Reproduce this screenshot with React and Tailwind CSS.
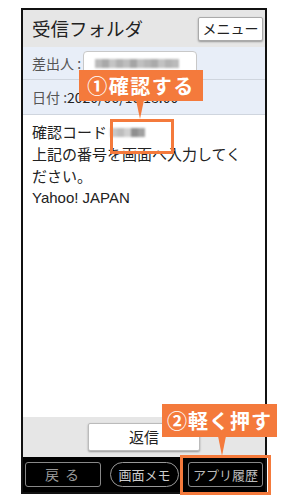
import React from 'react';

const Blur = ({ blocks }) => (
  <div className="flex items-center blur-[1px]">
    {blocks.map((c, i) => (
      <span key={i} className={`inline-block h-[9px] w-[7px] ${c}`} />
    ))}
  </div>
);

const App = () => {
  return (
    <div
      className="relative w-[285px] h-[500px] bg-white overflow-hidden"
      style={{ fontFamily: '"Noto Sans CJK JP", "Noto Sans", sans-serif' }}
    >
      {/* 端末の枠 */}
      <div className="ml-[21px] mt-[8px] w-[246px] h-[486px] border-2 border-[#111] flex flex-col">
        {/* ヘッダー */}
        <div className="h-[37px] bg-[#e6e6e6] flex items-center justify-between pl-[9px] pr-[2px]">
          <span className="text-[18.5px] text-[#222] leading-none">受信フォルダ</span>
          <div className="w-[65px] h-[24px] bg-white border border-[#aaa] rounded-[2px] shadow-[0_1px_2px_rgba(0,0,0,0.35)] flex items-center justify-center text-[14px] text-[#222]">
            メニュー
          </div>
        </div>

        {/* 差出人 */}
        <div className="h-[33px] bg-[#e8eef8] border-b border-[#cfd5de] flex items-center pl-[9px]">
          <span className="text-[14px] text-[#555]">差出人 :</span>
          <div className="ml-[2px] w-[114px] h-[25px] bg-white border border-[#c8c8c8] rounded-[4px] flex items-center pl-[11px]">
            <Blur blocks={['bg-[#b9b9b9]', 'bg-[#a9a9a9]', 'bg-[#c4c4c4]', 'bg-[#b0b0b0]', 'bg-[#bdbdbd]', 'bg-[#a5a5a5]', 'bg-[#c0c0c0]', 'bg-[#b5b5b5]', 'bg-[#aaaaaa]', 'bg-[#c2c2c2]', 'bg-[#b3b3b3]', 'bg-[#bbbbbb]']} />
          </div>
        </div>

        {/* 日付 */}
        <div className="h-[35px] bg-[#e8eef8] border-b border-[#cfd5de] flex items-center pl-[9px]">
          <span className="text-[14px] text-[#555]">日付 :</span>
          <span className="text-[14px] text-[#222]">2020/06/16 18:00</span>
        </div>

        {/* 本文 */}
        <div className="flex-1 bg-white pl-[9px] pt-[6px] text-[15px] leading-[22px] text-[#222]">
          <div className="flex items-center">
            <span>確認コード</span>
            <div className="ml-[3px]">
              <Blur blocks={['bg-[#c8c8c8]', 'bg-[#bdbdbd]', 'bg-[#d0d0d0]', 'bg-[#8f8f8f]', 'bg-[#a0a0a0]']} />
            </div>
          </div>
          <div>上記の番号を画面へ入力してく</div>
          <div>ださい。</div>
          <div style={{ fontFamily: '"Liberation Sans", sans-serif' }}>Yahoo! JAPAN</div>
        </div>

        {/* 返信 */}
        <div className="h-[40px] bg-[#e6e6e6] flex items-center justify-center">
          <div className="w-[112px] h-[28px] bg-white border border-[#bbb] rounded-[2px] shadow-[0_1px_2px_rgba(0,0,0,0.35)] flex items-center justify-center text-[15px] text-[#222]">
            返信
          </div>
        </div>

        {/* ナビゲーションバー */}
        <div className="h-[35px] bg-black flex items-center justify-between px-[2px]">
          <div className="w-[76px] h-[25px] border border-[#888] rounded-[3px] flex items-center justify-center text-[14px] text-[#999] tracking-[6px] pl-[4px]">
            戻る
          </div>
          <div className="w-[69px] h-[25px] border border-[#999] rounded-full flex items-center justify-center text-[13px] text-[#ccc]">
            画面メモ
          </div>
          <div className="w-[75px] h-[25px] border border-[#888] rounded-[3px] flex items-center justify-center text-[13px] text-[#bbb]">
            アプリ履歴
          </div>
        </div>
      </div>

      {/* ①確認する */}
      <div className="absolute left-[79px] top-[70px] w-[124px] h-[31px] bg-[#f47a3c] flex items-center justify-center text-white font-bold text-[20px] tracking-[1.5px]">
        ①確認する
      </div>
      <svg className="absolute left-[135px] top-[100px]" width="10" height="19" viewBox="0 0 10 19">
        <polygon points="1,0 9,0 5,19" fill="#f47a3c" />
      </svg>
      <div className="absolute left-[110px] top-[119px] w-[64px] h-[35px] border-[3px] border-[#f47a3c]" />

      {/* ②軽く押す */}
      <div className="absolute left-[162px] top-[404px] w-[115px] h-[33px] bg-[#f47a3c] flex items-center justify-center text-white font-bold text-[20px] tracking-[1px]">
        ②軽く押す
      </div>
      <svg className="absolute left-[217px] top-[436px]" width="10" height="20" viewBox="0 0 10 20">
        <polygon points="1,0 9,0 5,20" fill="#f47a3c" />
      </svg>
      <div className="absolute left-[180px] top-[455px] w-[91px] h-[40px] border-[3px] border-[#f47a3c]" />
    </div>
  );
};

export default App;
